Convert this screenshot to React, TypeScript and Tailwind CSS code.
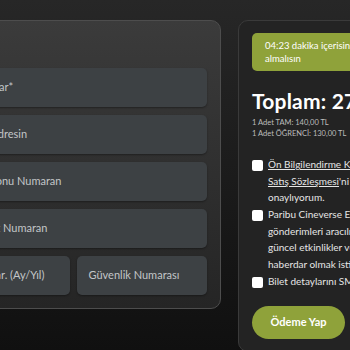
import React from "react";

const fields = ["Ad Soyadlar*", "E-posta Adresin", "Cep Telefonu Numaran", "Kredi Kart Numaran"];

function Field({ label, className = "" }: { label: string; className?: string }) {
  return (
    <div
      className={`h-[39px] rounded-[5px] bg-[#3d4144] shadow-[0_1px_2px_rgba(0,0,0,0.35)] flex items-center pl-[12px] text-[11px] text-[#c3c6c8] whitespace-nowrap ${className}`}
    >
      {label}
    </div>
  );
}

function Check({ children }: { children: React.ReactNode }) {
  return (
    <div className="flex items-start gap-[5px]">
      <span className="mt-[4px] w-[11px] h-[11px] shrink-0 rounded-[2px] bg-white" />
      <p className="text-[10px] leading-[16.5px] text-[#e6e6e6] whitespace-nowrap">{children}</p>
    </div>
  );
}

export default function App() {
  return (
    <div
      className="w-[350px] h-[350px] overflow-hidden bg-gradient-to-b from-[#272727] to-[#101010]"
      style={{ fontFamily: "Lato, 'Open Sans', sans-serif" }}
    >
      <div className="flex items-start gap-[17px] ml-[-76px] pt-[20px]">
        {/* payment form card */}
        <div className="w-[297px] shrink-0 rounded-[10px] border border-[#4d4d4d] bg-gradient-to-b from-[#3b3b3b] to-[#252525] pt-[47px] pb-[13px] pl-[14px] pr-[13px] flex flex-col gap-[8px]">
          {fields.map((f) => (
            <Field key={f} label={f} />
          ))}
          <div className="flex gap-[7px]">
            <Field label="Son Ku. Tar. (Ay/Yıl)" className="flex-1" />
            <Field label="Güvenlik Numarası" className="flex-1" />
          </div>
        </div>

        {/* summary card */}
        <div className="w-[200px] shrink-0 rounded-[10px] border border-[#3a3a3a] bg-[#232323] pt-[12px] pl-[13px] pb-[12px]">
          <div className="h-[38px] rounded-[5px] bg-[#8fa23a] pl-[13px] pt-[6px] text-[9.5px] leading-[13px] text-white">
            <div className="whitespace-nowrap">04:23 dakika içerisinde ödemeyi</div>
            <div>almalısın</div>
          </div>
          <div className="mt-[17px] text-[21px] font-bold leading-[26px] text-white whitespace-nowrap tracking-[0.2px]">
            Toplam: 270,00 TL
          </div>
          <div className="mt-[3px] text-[7.5px] leading-[11px] text-[#bdbdbd] whitespace-nowrap">
            <div>1 Adet TAM: 140,00 TL</div>
            <div>1 Adet ÖĞRENCİ: 130,00 TL</div>
          </div>
          <div className="mt-[17px] flex flex-col gap-[0.5px]">
            <Check>
              <span className="underline">Ön Bilgilendirme Koşulları</span>'nı ve
              <br />
              <span className="underline">Satış Sözleşmesi</span>'ni okudum
              <br />
              onaylıyorum.
            </Check>
            <Check>
              Paribu Cineverse E-Bülten
              <br />
              gönderimleri aracılığıyla
              <br />
              güncel etkinlikler ve
              <br />
              haberdar olmak istiyorum.
            </Check>
            <Check>Bilet detaylarını SMS ile almak</Check>
          </div>
          <button className="mt-[17px] w-[93px] h-[33px] rounded-full bg-[#8fa23a] text-[11px] font-bold text-white">
            Ödeme Yap
          </button>
        </div>
      </div>
    </div>
  );
}
